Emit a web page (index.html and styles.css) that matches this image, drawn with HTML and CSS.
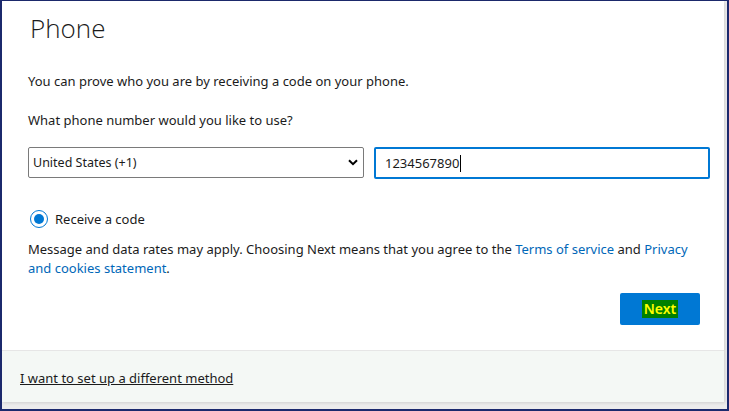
FILE: index.html
```html
<!DOCTYPE html>
<html lang="en">
<head>
<meta charset="utf-8">
<title>Phone</title>
<link rel="stylesheet" href="styles.css">
</head>
<body>
<div class="frame">
  <div class="card">
    <div class="main">
      <h1 class="title">Phone</h1>
      <p class="text intro">You can prove who you are by receiving a code on your phone.</p>
      <p class="text question">What phone number would you like to use?</p>
      <div class="fields">
        <div class="select">
          <span>United States (+1)</span>
          <svg class="chev" width="10" height="7" viewBox="0 0 10 7"><path d="M1 1.2 L5 5.2 L9 1.2" fill="none" stroke="#000" stroke-width="2"/></svg>
        </div>
        <div class="input"><span>1234567890</span><span class="caret"></span></div>
      </div>
      <label class="radio-row">
        <span class="radio"><span class="dot"></span></span>
        <span>Receive a code</span>
      </label>
      <div class="terms">
        <p class="text">Message and data rates may apply. Choosing Next means that you agree to the <a class="link">Terms of service</a> and <a class="link">Privacy</a></p>
        <p class="text"><a class="link">and cookies statement</a>.</p>
      </div>
      <div class="actions">
        <button class="next"><span class="hl">Next</span></button>
      </div>
    </div>
    <div class="footer">
      <a class="alt">I want to set up a different method</a>
    </div>
  </div>
</div>
</body>
</html>
```
FILE: styles.css
```css
* { box-sizing: border-box; }
html, body { margin: 0; padding: 0; }
body {
  width: 729px;
  height: 411px;
  overflow: hidden;
  font-family: "Noto Sans", "Open Sans", sans-serif;
  color: #1b1b1b;
  background: #fff;
}
.frame {
  width: 729px;
  height: 411px;
  border-top: 1px solid #1c2a6e;
  border-left: 2px solid #1c2a6e;
  border-right: 2px solid #1c2a6e;
  border-bottom: 2px solid #1c2a6e;
  background: #ececec;
}
.card {
  width: 722px;
  height: 401px;
  background: #fff;
  display: flex;
  flex-direction: column;
  box-shadow: 1px 1px 3px rgba(0,0,0,0.12);
}
.main {
  flex: 1;
  padding: 10px 0 0 26px;
}
.title {
  margin: 0;
  font-family: "Open Sans", sans-serif;
  font-weight: 300;
  font-size: 26px;
  line-height: 34px;
  padding-left: 2px;
  color: #1b1b1b;
}
.text {
  margin: 0;
  font-size: 13px;
  line-height: 19px;
}
.intro { margin-top: 27px; }
.question { margin-top: 20px; }
.fields {
  display: flex;
  gap: 10px;
  margin-top: 17px;
  width: 684px;
}
.select {
  width: 336px;
  height: 31px;
  border: 1px solid #7a7a7a;
  border-radius: 2px;
  display: flex;
  align-items: center;
  justify-content: space-between;
  padding: 0 5px 0 4px;
  font-size: 12.5px;
}
.input {
  width: 336px;
  height: 32px;
  border: 2px solid #0078d4;
  border-radius: 2px;
  display: flex;
  align-items: center;
  padding-left: 9px;
  font-size: 13px;
}
.caret {
  display: inline-block;
  width: 1px;
  height: 17px;
  background: #000;
  margin-left: 1px;
}
.radio-row {
  display: flex;
  align-items: center;
  gap: 7px;
  margin-top: 31px;
  font-size: 13px;
  padding-left: 2px;
}
.radio {
  width: 18px;
  height: 18px;
  border: 1px solid #0078d4;
  border-radius: 50%;
  display: flex;
  align-items: center;
  justify-content: center;
}
.dot {
  width: 10px;
  height: 10px;
  border-radius: 50%;
  background: #0078d4;
}
.terms {
  margin-top: 12px;
  width: 690px;
}
.terms .text { white-space: nowrap; }
.link { color: #0067b8; text-decoration: none; }
.actions {
  display: flex;
  justify-content: flex-end;
  width: 672px;
  margin-top: 15px;
}
.next {
  width: 80px;
  height: 32px;
  background: #0078d4;
  border: none;
  border-radius: 2px;
  font-family: "Noto Sans", sans-serif;
  font-size: 14px;
  font-weight: 600;
  padding: 0;
  display: flex;
  align-items: center;
  justify-content: center;
}
.hl {
  background: #008000;
  color: #ffff00;
  padding: 0 2px;
  line-height: 18px;
}
.footer {
  height: 52px;
  background: #f4f8f5;
  border-top: 1px solid #e6e6e6;
  display: flex;
  align-items: center;
  padding-left: 18px;
  padding-top: 2px;
}
.alt {
  font-size: 13px;
  color: #1b1b1b;
  text-decoration: underline;
}
```
